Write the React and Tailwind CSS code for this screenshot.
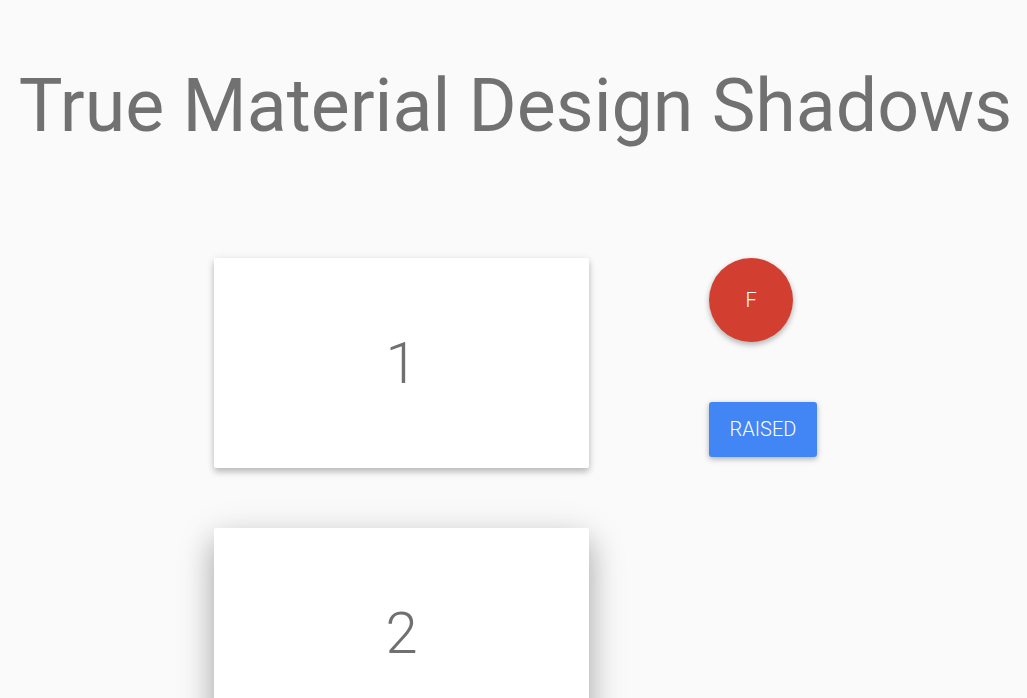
export default function App() {
  return (
    <div className="min-h-screen bg-[#fafafa] overflow-hidden" style={{ fontFamily: 'Roboto, "Liberation Sans", sans-serif' }}>
      {/* title */}
      <h1 className="pt-[70px] pl-[4px] text-center text-[73.5px] leading-none font-normal text-[#717171] whitespace-nowrap">
        True Material Design Shadows
      </h1>

      <div className="mt-[114px] ml-[214px] flex gap-[120px]">
        {/* cards */}
        <div className="flex flex-col gap-[60px]">
          <div className="w-[375px] h-[210px] bg-white rounded-[2px] flex items-center justify-center shadow-[0_4px_6px_rgba(0,0,0,0.22),0_1px_10px_rgba(0,0,0,0.08)]">
            <span className="text-[58px] font-light text-[#707070] leading-none">1</span>
          </div>
          <div className="w-[375px] h-[210px] bg-white rounded-[2px] flex items-center justify-center shadow-[0_14px_28px_rgba(0,0,0,0.22),0_10px_40px_rgba(0,0,0,0.16)]">
            <span className="text-[58px] font-light text-[#707070] leading-none">2</span>
          </div>
        </div>

        {/* buttons */}
        <div className="flex flex-col items-start">
          <button className="w-[84px] h-[84px] rounded-full bg-[#d23f31] text-white text-[20px] font-light flex items-center justify-center shadow-[0_3px_6px_rgba(0,0,0,0.2),0_2px_5px_rgba(0,0,0,0.12)]">
            F
          </button>
          <button className="mt-[60px] w-[108px] h-[55px] rounded-[3px] bg-[#4285f4] text-white text-[20px] font-light flex items-center justify-center shadow-[0_2px_5px_rgba(0,0,0,0.22),0_2px_8px_rgba(0,0,0,0.1)]">
            RAISED
          </button>
        </div>
      </div>
    </div>
  );
}
